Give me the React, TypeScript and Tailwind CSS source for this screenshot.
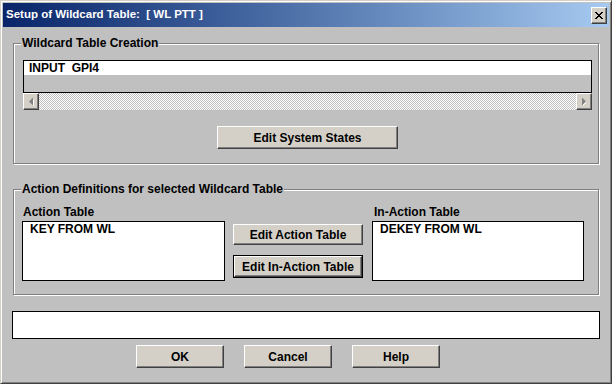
import React from "react";

const btn =
  "flex items-center justify-center bg-[#d4d0c8] border border-t-white border-l-white border-b-[#404040] border-r-[#404040] shadow-[inset_-1px_-1px_0_#808080] text-black font-bold text-[12px] leading-none";

const group =
  "border border-[#808080] shadow-[inset_1px_1px_0_#fff,1px_1px_0_#fff]";

const Legend: React.FC<{ className: string; children: React.ReactNode }> = ({ className, children }) => (
  <legend className={`${className} px-[1px] bg-[#c0c0c0] text-[12px] leading-[13px] font-bold text-black`}>
    {children}
  </legend>
);

const ArrowButton: React.FC<{ dir: "left" | "right" }> = ({ dir }) => (
  <div className={`${btn} w-[16px] h-[17px] shrink-0`}>
    <svg width="6" height="9" viewBox="0 0 6 9">
      {dir === "left" ? (
        <>
          <path d="M5 1 L5 8 L1.5 4.5 Z" fill="#fff" transform="translate(1 1)" />
          <path d="M5 0.5 L5 8.5 L1 4.5 Z" fill="#808080" />
        </>
      ) : (
        <>
          <path d="M1 1 L1 8 L4.5 4.5 Z" fill="#fff" transform="translate(1 1)" />
          <path d="M1 0.5 L1 8.5 L5 4.5 Z" fill="#808080" />
        </>
      )}
    </svg>
  </div>
);

export default function App() {
  return (
    <div
      className="w-[612px] h-[384px] flex flex-col bg-[#c0c0c0] border border-t-[#d4d0c8] border-l-[#d4d0c8] border-b-[#404040] border-r-[#404040] shadow-[inset_1px_1px_0_#fff,inset_-1px_-1px_0_#808080] p-[2px] overflow-hidden"
      style={{ fontFamily: '"Liberation Sans", Arial, sans-serif' }}
    >
      {/* Title bar */}
      <div className="h-[24px] shrink-0 flex items-center justify-between pl-[3px] pr-[2px] bg-gradient-to-r from-[#0a246a] to-[#a6caf0]">
        <span className="text-white font-bold text-[11.5px] leading-none">
          Setup of Wildcard Table:&nbsp; [ WL PTT ]
        </span>
        <div className={`${btn} w-[16px] h-[17px]`}>
          <svg width="8" height="7" viewBox="0 0 8 7" shapeRendering="crispEdges">
            <path
              d="M0 0h2v1h1v1h2V1h1V0h2v1H7v1H6v1H5v1h1v1h1v1h1v1H6V6H5V5H3v1H2v1H0V6h1V5h1V4h1V3H2V2H1V1H0z"
              fill="#000"
            />
          </svg>
        </div>
      </div>

      {/* Wildcard Table Creation */}
      <fieldset className={`${group} mt-[10px] ml-[10px] w-[586px] pl-[9px] pt-[10px] pb-[14px] flex flex-col`}>
        <Legend className="-ml-[2px]">Wildcard Table Creation</Legend>
        <div className="w-[569px] flex flex-col">
          <div className="h-[33px] border border-black bg-[#c0c0c0]">
            <div className="h-[14px] bg-white flex items-center pl-[5px] text-[12px] font-bold leading-none whitespace-pre">
              INPUT  GPI4
            </div>
          </div>
          <div className="h-[17px] flex bg-[length:2px_2px] bg-[image:repeating-conic-gradient(#fff_0_25%,#c0c0c0_0_50%)]">
            <ArrowButton dir="left" />
            <div className="flex-1" />
            <ArrowButton dir="right" />
          </div>
        </div>
        <div className={`${btn} mt-[16px] ml-[194px] w-[181px] h-[23px]`}>Edit System States</div>
      </fieldset>

      {/* Action Definitions */}
      <fieldset className={`${group} mt-[19px] ml-[10px] w-[586px] pl-[8px] pt-[10px] pb-[13px]`}>
        <Legend className="-ml-[1px]">Action Definitions for selected Wildcard Table</Legend>
        <div className="flex">
          <div className="w-[203px] flex flex-col">
            <span className="pl-[1px] text-[12px] font-bold leading-[13px]">Action Table</span>
            <div className="mt-[2px] h-[60px] bg-white border border-black pl-[7px] pt-[1px] text-[12px] font-bold leading-[13px]">
              KEY FROM WL
            </div>
          </div>
          <div className="ml-[8px] w-[130px] pt-[18px] flex flex-col gap-[10px]">
            <div className={`${btn} h-[21px]`}>Edit Action Table</div>
            <div className="h-[23px] border border-black flex">
              <div className={`${btn} flex-1`}>Edit In-Action Table</div>
            </div>
          </div>
          <div className="ml-[9px] w-[212px] flex flex-col">
            <span className="pl-[2px] text-[12px] font-bold leading-[13px]">In-Action Table</span>
            <div className="mt-[2px] h-[60px] bg-white border border-black pl-[7px] pt-[1px] text-[12px] font-bold leading-[13px]">
              DEKEY FROM WL
            </div>
          </div>
        </div>
      </fieldset>

      {/* Status field */}
      <div className="mt-[16px] ml-[9px] w-[588px] h-[28px] bg-white border border-black" />

      {/* Dialog buttons */}
      <div className="mt-[6px] ml-[133px] flex gap-[20px]">
        <div className={`${btn} w-[88px] h-[23px]`}>OK</div>
        <div className={`${btn} w-[88px] h-[23px]`}>Cancel</div>
        <div className={`${btn} w-[88px] h-[23px]`}>Help</div>
      </div>
    </div>
  );
}
